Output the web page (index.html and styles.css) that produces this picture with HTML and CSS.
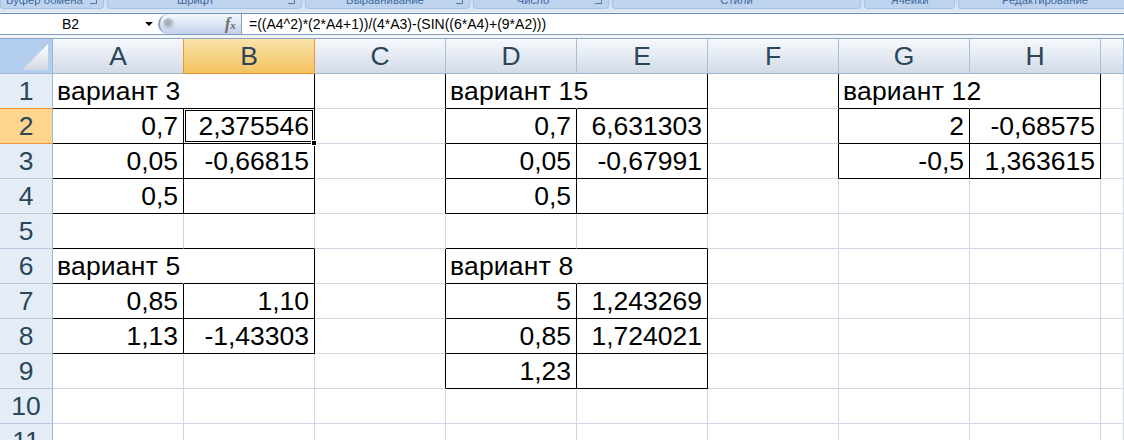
FILE: index.html
```html
<!DOCTYPE html>
<html lang="ru">
<head>
<meta charset="utf-8">
<title>Excel</title>
<link rel="stylesheet" href="styles.css">
</head>
<body>
<div class="ribbon">
  <div class="grp g1">Буфер обмена<span class="launch"></span></div>
  <div class="grp g2">Шрифт<span class="launch"></span></div>
  <div class="grp g3">Выравнивание<span class="launch"></span></div>
  <div class="grp g4">Число<span class="launch"></span></div>
  <div class="grp g5">Стили</div>
  <div class="grp g6">Ячейки</div>
  <div class="grp g7">Редактирование</div>
</div>
<div class="fbar">
  <div class="namebox"><span class="nameval">B2</span><span class="arrow"></span></div>
  <div class="fxpill"><span class="knob"></span><span class="fx">f<small>x</small></span></div>
  <div class="formula">=((A4^2)*(2*A4+1))/(4*A3)-(SIN((6*A4)+(9*A2)))</div>
</div>
<div class="gap"></div>
<div class="sheet">
  <div class="corner"><svg class="tri" width="26" height="26" viewBox="0 0 26 26"><defs><linearGradient id="t" x1="0" y1="0" x2="0" y2="1"><stop offset="0" stop-color="#ffffff"/><stop offset="1" stop-color="#d3d8e0"/></linearGradient></defs><polygon points="0,26 26,0 26,26" fill="url(#t)"/></svg></div>
  <div class="ch pre">A</div><div class="ch on">B</div><div class="ch">C</div><div class="ch">D</div><div class="ch">E</div><div class="ch">F</div><div class="ch">G</div><div class="ch">H</div><div class="ch"></div>

  <div class="rh pre">1</div><div class="c bb m">вариант 3</div><div class="c br bb"></div><div class="c br"></div><div class="c bb m">вариант 15</div><div class="c br bb"></div><div class="c br"></div><div class="c bb m">вариант 12</div><div class="c br bb"></div><div class="c"></div>

  <div class="rh on">2</div><div class="c n br bb">0,7</div><div class="c n br bb act">2,375546</div><div class="c br"></div><div class="c n br bb">0,7</div><div class="c n br bb">6,631303</div><div class="c br"></div><div class="c n br bb">2</div><div class="c n br bb">-0,68575</div><div class="c"></div>

  <div class="rh">3</div><div class="c n br bb">0,05</div><div class="c n br bb">-0,66815</div><div class="c br"></div><div class="c n br bb">0,05</div><div class="c n br bb">-0,67991</div><div class="c br"></div><div class="c n br bb">-0,5</div><div class="c n br bb">1,363615</div><div class="c"></div>

  <div class="rh">4</div><div class="c n br bb">0,5</div><div class="c n br bb"></div><div class="c br"></div><div class="c n br bb">0,5</div><div class="c n br bb"></div><div class="c"></div><div class="c"></div><div class="c"></div><div class="c"></div>

  <div class="rh">5</div><div class="c bb"></div><div class="c bb"></div><div class="c"></div><div class="c bb"></div><div class="c bb"></div><div class="c"></div><div class="c"></div><div class="c"></div><div class="c"></div>

  <div class="rh">6</div><div class="c bb m">вариант 5</div><div class="c br bb"></div><div class="c br"></div><div class="c bb m">вариант 8</div><div class="c br bb"></div><div class="c"></div><div class="c"></div><div class="c"></div><div class="c"></div>

  <div class="rh">7</div><div class="c n br bb">0,85</div><div class="c n br bb">1,10</div><div class="c br"></div><div class="c n br bb">5</div><div class="c n br bb">1,243269</div><div class="c"></div><div class="c"></div><div class="c"></div><div class="c"></div>

  <div class="rh">8</div><div class="c n br bb">1,13</div><div class="c n br bb">-1,43303</div><div class="c br"></div><div class="c n br bb">0,85</div><div class="c n br bb">1,724021</div><div class="c"></div><div class="c"></div><div class="c"></div><div class="c"></div>

  <div class="rh">9</div><div class="c"></div><div class="c"></div><div class="c br"></div><div class="c n br bb">1,23</div><div class="c n br bb"></div><div class="c"></div><div class="c"></div><div class="c"></div><div class="c"></div>

  <div class="rh">10</div><div class="c"></div><div class="c"></div><div class="c"></div><div class="c"></div><div class="c"></div><div class="c"></div><div class="c"></div><div class="c"></div><div class="c"></div>

  <div class="rh">11</div><div class="c"></div><div class="c"></div><div class="c"></div><div class="c"></div><div class="c"></div><div class="c"></div><div class="c"></div><div class="c"></div><div class="c"></div>
</div>
</body>
</html>
```
FILE: styles.css
```css
html, body {
  margin: 0;
  height: 440px;
  overflow: hidden;
  background: #fff;
}
body {
  font-family: "Liberation Sans", Arial, sans-serif;
}

/* ribbon remainder */
.ribbon {
  display: flex;
  gap: 3px;
  height: 13px;
  background: linear-gradient(#c9dcf2, #dbe7f6);
  overflow: hidden;
  box-sizing: border-box;
  border-bottom: 1px solid #e6eef8;
}
.grp {
  position: relative;
  flex: none;
  box-sizing: border-box;
  height: 9px;
  background: #bed3ee;
  border: 1px solid #a9c2e0;
  border-top: 0;
  border-radius: 0 0 4px 4px;
  color: #3f69a0;
  font-size: 11.3px;
  line-height: 1px;
  text-align: center;
  overflow: hidden;
  white-space: nowrap;
}
.g1 { width: 104px; padding-right: 15px; }
.g2 { width: 195px; padding-right: 18px; }
.g3 { width: 165px; padding-right: 5px; }
.g4 { width: 136px; padding-right: 16px; }
.g5 { width: 249px; }
.g6 { width: 91px; }
.g7 { width: 174px; }
.launch {
  position: absolute;
  right: 6px;
  top: 0;
  width: 6px;
  height: 3px;
  border-right: 1px solid #60789a;
  border-bottom: 1px solid #60789a;
}

/* formula bar */
.fbar {
  display: flex;
  height: 20px;
  background: #fff;
  border-top: 1px solid #6d8fb3;
  border-bottom: 1px solid #7f9fc2;
}
.namebox {
  position: relative;
  width: 158px;
  flex: none;
  font-size: 14px;
  line-height: 20px;
}
.nameval {
  position: absolute;
  left: 62px;
}
.arrow {
  position: absolute;
  left: 145px;
  top: 8px;
  border-left: 4px solid transparent;
  border-right: 4px solid transparent;
  border-top: 4px solid #000;
}
.fxpill {
  position: relative;
  width: 84px;
  flex: none;
  box-sizing: border-box;
  background: linear-gradient(#f4f7fc, #c2d2ea);
  border-left: 2px solid #86a3c6;
  border-right: 1px solid #86a3c6;
  border-radius: 11px 0 0 11px;
}
.knob {
  position: absolute;
  left: 3px;
  top: 4px;
  width: 11px;
  height: 11px;
  border-radius: 50%;
  background: radial-gradient(circle at 45% 45%, #9aa3ad, #c9d3e0 70%, transparent 75%);
}
.fx {
  position: absolute;
  left: 65px;
  top: 0;
  font-family: "Liberation Serif", serif;
  font-style: italic;
  font-weight: bold;
  font-size: 16px;
  line-height: 19px;
  color: #6b6b6b;
}
.fx small {
  font-size: 11px;
}
.formula {
  padding-left: 7px;
  font-size: 14.01px;
  line-height: 20px;
  white-space: nowrap;
  color: #000;
}
.gap {
  height: 3px;
  background: #f2f6fb;
  border-bottom: 1px solid #8aa6c6;
}

/* sheet */
.sheet {
  display: grid;
  grid-template-columns: 53px repeat(8, 131px) 1fr;
  grid-auto-rows: 35px;
  font-size: 26.5px;
}
.corner {
  position: relative;
  box-sizing: border-box;
  background: #b3cdee;
  border-right: 1px solid #9eb6ce;
  border-bottom: 1px solid #9eb6ce;
}
.tri {
  position: absolute;
  left: 22px;
  top: 5px;
}
.ch, .rh {
  display: flex;
  align-items: center;
  justify-content: center;
  box-sizing: border-box;
  color: #2a4658;
  border-right: 1px solid #a9bfd8;
  border-bottom: 1px solid #9eb6ce;
}
.ch {
  background: linear-gradient(#f6f9fd, #d2dbe8);
}
.rh {
  background: #e4ecf7;
  border-right-color: #9eb6ce;
  border-bottom-color: #b7c9e0;
}
.ch.on {
  background: linear-gradient(#fbe3ac, #f2c25f);
  border-right-color: #f29536;
  border-bottom-color: #f29536;
}
.ch.pre {
  border-right-color: #f29536;
}
.rh.on {
  background: #ffd58d;
  border-bottom-color: #f29536;
}
.rh.pre {
  border-bottom-color: #f29536;
}

.c {
  box-sizing: border-box;
  padding: 0 5px;
  line-height: 35px;
  white-space: nowrap;
  color: #000;
  border-right: 1px solid #d0d7e5;
  border-bottom: 1px solid #d0d7e5;
}
.n { text-align: right; }
.br { border-right-color: #000; }
.bb { border-bottom-color: #000; }
.m {
  border-right-color: transparent;
  padding-left: 4px;
  letter-spacing: 0.2px;
}
.act {
  position: relative;
}
.act::before {
  content: "";
  position: absolute;
  left: -1px;
  top: -1px;
  right: -1px;
  bottom: -1px;
  border: 1px solid #000;
  outline: 1px solid #000;
  outline-offset: -3px;
}
.act::after {
  content: "";
  position: absolute;
  right: -3px;
  bottom: -3px;
  width: 4px;
  height: 4px;
  background: #000;
  border: 1px solid #fff;
}
```
